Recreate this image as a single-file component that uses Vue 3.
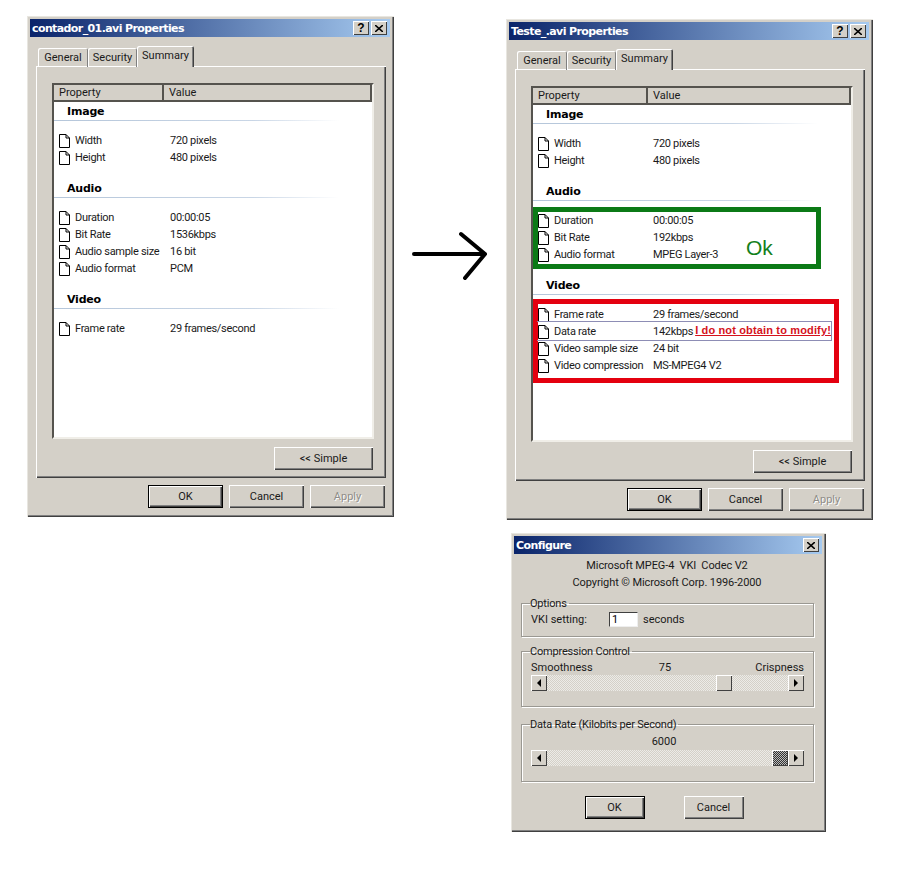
<script setup>
const dialogs = [
  {
    id: 'first',
    title: 'contador_01.avi Properties',
    groups: [
      { name: 'Image', rows: [['Width', '720 pixels'], ['Height', '480 pixels']] },
      { name: 'Audio', rows: [['Duration', '00:00:05'], ['Bit Rate', '1536kbps'], ['Audio sample size', '16 bit'], ['Audio format', 'PCM']] },
      { name: 'Video', rows: [['Frame rate', '29 frames/second']] }
    ]
  },
  {
    id: 'second',
    title: 'Teste_.avi Properties',
    groups: [
      { name: 'Image', rows: [['Width', '720 pixels'], ['Height', '480 pixels']] },
      { name: 'Audio', rows: [['Duration', '00:00:05'], ['Bit Rate', '192kbps'], ['Audio format', 'MPEG Layer-3']] },
      { name: 'Video', rows: [['Frame rate', '29 frames/second'], ['Data rate', '142kbps'], ['Video sample size', '24 bit'], ['Video compression', 'MS-MPEG4 V2']] }
    ]
  }
]
</script>

<template>
  <div class="desktop">
    <div v-for="d in dialogs" :key="d.id" class="win props" :class="d.id">
      <div class="titlebar">
        <span class="title">{{ d.title }}</span>
        <button class="cap help">?</button>
        <button class="cap">
          <svg viewBox="0 0 8 7" width="8" height="7"><path d="M0 0l8 7M8 0l-8 7" stroke="#000" stroke-width="1.6" fill="none" /></svg>
        </button>
      </div>
      <div class="tabs">
        <div class="tab t-general">General</div>
        <div class="tab t-security">Security</div>
        <div class="tab active">Summary</div>
      </div>
      <div class="panel">
        <div class="list">
          <div class="list-head">
            <div class="head-cell">Property</div>
            <div class="head-cell">Value</div>
          </div>
          <div v-for="g in d.groups" :key="g.name" class="group">
            <div class="group-name">{{ g.name }}</div>
            <div v-for="r in g.rows" :key="r[0]" class="row">
              <div class="prop">
                <svg class="doc" viewBox="0 0 11 14" width="11" height="14">
                  <path d="M.5 .5h6.500l3.500 3.500v9.500h-10z" fill="#fff" stroke="#000" />
                  <path d="M7 .5v3.500h3.500" fill="none" stroke="#000" />
                </svg>
                {{ r[0] }}
              </div>
              <div class="val">{{ r[1] }}</div>
            </div>
          </div>
        </div>
        <div class="simple-wrap"><button class="btn simple">&lt;&lt; Simple</button></div>
      </div>
      <div class="actions">
        <button class="btn def">OK</button>
        <button class="btn">Cancel</button>
        <button class="btn off">Apply</button>
      </div>
    </div>

    <svg class="arrow" viewBox="0 0 80 50" width="80" height="50">
      <path d="M3 23h71M50 3l24 20-20 24" fill="none" stroke="#000" stroke-width="4" stroke-linecap="round" stroke-linejoin="round" />
    </svg>

    <div class="mark green"></div>
    <div class="ok-note">Ok</div>
    <div class="mark red"></div>
    <div class="data-line"><span>I do not obtain to modify!</span></div>

    <div class="win config">
      <div class="titlebar">
        <span class="title">Configure</span>
        <button class="cap">
          <svg viewBox="0 0 8 7" width="8" height="7"><path d="M0 0l8 7M8 0l-8 7" stroke="#000" stroke-width="1.6" fill="none" /></svg>
        </button>
      </div>
      <div class="about">
        <div>Microsoft MPEG-4&nbsp; VKI&nbsp; Codec V2</div>
        <div>Copyright © Microsoft Corp. 1996-2000</div>
      </div>
      <fieldset class="box options">
        <legend>Options</legend>
        <div class="vki">
          <span class="vki-label">VKI setting:</span>
          <span class="field">1</span>
          <span>seconds</span>
        </div>
      </fieldset>
      <fieldset class="box control">
        <legend>Compression Control</legend>
        <div class="scale"><span>Smoothness</span><span class="mid">75</span><span>Crispness</span></div>
        <div class="scroll">
          <button class="arr"><i class="tri left"></i></button>
          <div class="track"><div class="thumb"></div></div>
          <button class="arr"><i class="tri right"></i></button>
        </div>
      </fieldset>
      <fieldset class="box control rate">
        <legend>Data Rate (Kilobits per Second)</legend>
        <div class="scale single"><span>6000</span></div>
        <div class="scroll">
          <button class="arr"><i class="tri left"></i></button>
          <div class="track end"><div class="thumb dark"></div></div>
          <button class="arr"><i class="tri right"></i></button>
        </div>
      </fieldset>
      <div class="config-actions">
        <button class="btn def">OK</button>
        <button class="btn">Cancel</button>
      </div>
    </div>
  </div>
</template>

<style>
html, body { background: #fff; }
</style>

<style scoped>
.desktop {
  position: relative;
  width: 919px;
  height: 877px;
  overflow: hidden;
  background: #fff;
  font-family: Roboto, "Liberation Sans", Arial, sans-serif;
  font-size: 11px;
  color: #1a1a1a;
}

button {
  font: inherit;
  color: inherit;
  padding: 0;
}

.win {
  position: absolute;
  box-sizing: border-box;
  display: flex;
  flex-direction: column;
  padding: 3px 4px 4px 3px;
  background: #d4d0c8;
  box-shadow: inset 1px 1px 0 #e8e6e0, inset -1px -1px 0 #404040, inset -2px -2px 0 #808080;
}

.props {
  width: 367px;
  height: 501px;
}

.first {
  left: 27px;
  top: 16px;
}

.second {
  left: 506px;
  top: 19px;
}

.config {
  left: 511px;
  top: 533px;
  width: 315px;
  height: 299px;
}

.titlebar {
  display: flex;
  align-items: center;
  flex: none;
  height: 18px;
  padding: 0 3px 0 2px;
  background: linear-gradient(90deg, #0a246a, #a6caf0);
  color: #fff;
}

.title {
  flex: 1;
  font-family: "DejaVu Sans", sans-serif;
  font-size: 11px;
  font-weight: 700;
  letter-spacing: -0.6px;
}

.cap {
  display: flex;
  align-items: center;
  justify-content: center;
  width: 16px;
  height: 14px;
  margin-left: 1px;
  border: 0;
  background: #d4d0c8;
  box-shadow: inset 1px 1px 0 #fff, inset -1px -1px 0 #404040;
  font-family: "Liberation Sans", sans-serif;
  font-weight: 700;
  font-size: 12px;
  line-height: 1;
  color: #000;
}

.help {
  margin-right: 1px;
}

.tabs {
  display: flex;
  align-items: flex-end;
  flex: none;
  height: 21px;
  margin: 8px 0 0 8px;
  position: relative;
  z-index: 1;
  top: 1px;
}

.tab {
  box-sizing: border-box;
  height: 19px;
  padding-top: 3px;
  text-align: center;
  box-shadow: inset 1px 1px 0 #fff, inset -1px 0 0 #808080;
  border-radius: 2px 2px 0 0;
}

.t-general {
  width: 50px;
}

.t-security {
  width: 49px;
}

.tab.active {
  width: 57px;
  height: 21px;
  padding-top: 3px;
  background: #d4d0c8;
  box-shadow: inset 1px 1px 0 #fff, inset -1px 0 0 #404040, inset -2px 0 0 #808080;
}

.panel {
  flex: 1;
  display: flex;
  flex-direction: column;
  margin: 0 4px 0 6px;
  padding: 17px 12px 8px 16px;
  box-shadow: inset 1px 1px 0 #fff, inset -1px -1px 0 #404040, inset -2px -2px 0 #808080;
}

.list {
  flex: 1;
  box-sizing: border-box;
  border: 2px solid;
  border-color: #55534e #f0eee8 #f0eee8 #55534e;
  background: #fff;
}

.list-head,
.row {
  display: grid;
}

.first .list-head,
.first .row {
  grid-template-columns: 110px 1fr;
}

.second .list-head,
.second .row {
  grid-template-columns: 115px 1fr;
}

.second .val {
  padding-left: 5px;
}

.list-head {
  height: 15px;
  background: #d4d0c8;
  border-bottom: 2px solid #55534e;
  box-sizing: content-box;
}

.head-cell {
  padding: 1px 0 0 5px;
  line-height: 14px;
  border-right: 2px solid #55534e;
}

.group {
  margin-bottom: 13px;
}

.group-name {
  position: relative;
  height: 20px;
  margin-bottom: 10px;
  padding-left: 13px;
  font-family: "DejaVu Sans", sans-serif;
  font-weight: 700;
  line-height: 20px;
  color: #000;
  letter-spacing: -0.2px;
}

.group-name::after {
  content: "";
  position: absolute;
  left: 0;
  bottom: 1px;
  width: 285px;
  height: 1px;
  background: linear-gradient(90deg, #b5c6da, #c9d6e6 70%, #fff);
}

.row {
  height: 17px;
  line-height: 17px;
  letter-spacing: -0.3px;
}

.prop {
  display: flex;
  align-items: center;
  gap: 5px;
  padding-left: 5px;
  white-space: nowrap;
}

.doc {
  flex: none;
}

.val {
  padding-left: 6px;
  white-space: nowrap;
}

.simple-wrap {
  display: flex;
  justify-content: flex-end;
  padding: 8px 1px 0 0;
}

.btn {
  box-sizing: border-box;
  width: 75px;
  height: 23px;
  border: 0;
  background: #d4d0c8;
  box-shadow: inset 1px 1px 0 #fff, inset -1px -1px 0 #404040, inset -2px -2px 0 #808080;
}

.btn.simple {
  width: 99px;
}

.btn.def {
  border: 1px solid #000;
}

.btn.off {
  color: #8f8d88;
  text-shadow: 1px 1px 0 #fff;
}

.actions {
  flex: none;
  display: flex;
  justify-content: flex-end;
  gap: 6px;
  height: 35px;
  padding: 7px 5px 0 0;
  box-sizing: border-box;
}

.arrow {
  position: absolute;
  left: 411px;
  top: 231px;
}

.mark {
  position: absolute;
  box-sizing: border-box;
  border-style: solid;
  border-width: 5px;
}

.green {
  left: 533px;
  top: 207px;
  width: 288px;
  height: 62px;
  border-color: #0b7a16;
}

.ok-note {
  position: absolute;
  left: 746px;
  top: 236px;
  font-family: "Liberation Sans", sans-serif;
  font-size: 21px;
  line-height: 24px;
  color: #14801c;
}

.red {
  left: 533px;
  top: 299px;
  width: 306px;
  height: 84px;
  border-color: #e4000f;
}

.data-line {
  position: absolute;
  box-sizing: border-box;
  left: 537px;
  top: 321px;
  width: 295px;
  height: 20px;
  border: solid #8d8db5;
  border-width: 1px 1px 1px 0;
  text-align: right;
  line-height: 16px;
}

.data-line span {
  font-family: "Liberation Sans", sans-serif;
  font-weight: 700;
  letter-spacing: 0.15px;
  color: #d5121c;
  text-decoration: underline;
}

.about {
  flex: none;
  padding: 3px 0 0 0;
  text-align: center;
  line-height: 17px;
  margin-right: 2px;
  letter-spacing: -0.1px;
}

.box {
  flex: none;
  box-sizing: border-box;
  margin: 0 8px 0 7px;
  padding: 0 9px;
  border: 1px solid #9a9892;
  box-shadow: 1px 1px 0 #fff, inset 1px 1px 0 #fff;
}

.box legend {
  margin-left: -1px;
  padding: 0 2px 0 0;
  line-height: 13px;
  letter-spacing: -0.2px;
}

.options {
  margin-top: 6px;
  height: 40px;
}

.vki {
  display: flex;
  align-items: center;
  height: 16px;
  margin-top: 1px;
}

.vki-label {
  width: 78px;
}

.field {
  box-sizing: border-box;
  width: 29px;
  height: 15px;
  margin-right: 5px;
  padding-left: 2px;
  line-height: 14px;
  background: #fff;
  border: 1px solid;
  border-color: #404040 #eee #eee #404040;
  color: #000;
}

.control {
  margin-top: 8px;
  height: 62px;
}

.rate {
  margin-top: 11px;
  height: 64px;
}

.scale {
  display: grid;
  grid-template-columns: 1fr auto 1fr;
  height: 17px;
  line-height: 20px;
}

.scale span:last-child {
  text-align: right;
}

.scale .mid {
  margin-left: -5px;
}

.scale.single {
  display: flex;
  justify-content: center;
  margin-right: 7px;
  height: 19px;
  line-height: 21px;
}

.scroll {
  display: flex;
  height: 16px;
}

.arr {
  flex: none;
  display: flex;
  align-items: center;
  justify-content: center;
  width: 16px;
  height: 16px;
  border: 0;
  background: #d4d0c8;
  box-shadow: inset 1px 1px 0 #fff, inset -1px -1px 0 #404040;
}

.tri {
  display: block;
  border-style: solid;
  border-width: 4px 0;
  border-color: transparent;
}

.tri.left {
  border-right: 4px solid #000;
}

.tri.right {
  border-left: 4px solid #000;
}

.track {
  flex: 1;
  display: flex;
  justify-content: flex-end;
  padding-right: 56px;
  background: repeating-conic-gradient(#ecebe7 0 25%, #d4d0c8 0 50%) 0 0 / 2px 2px;
}

.track.end {
  padding-right: 0;
}

.thumb {
  width: 16px;
  height: 16px;
  background: #d4d0c8;
  box-shadow: inset 1px 1px 0 #fff, inset -1px -1px 0 #404040;
}

.thumb.dark {
  background: repeating-conic-gradient(#333 0 25%, #bbb 0 50%) 0 0 / 2px 2px;
}

.config-actions {
  display: flex;
  justify-content: center;
  gap: 39px;
  margin-top: 14px;
  margin-right: 8px;
}

.config-actions .btn {
  width: 60px;
}
</style>
